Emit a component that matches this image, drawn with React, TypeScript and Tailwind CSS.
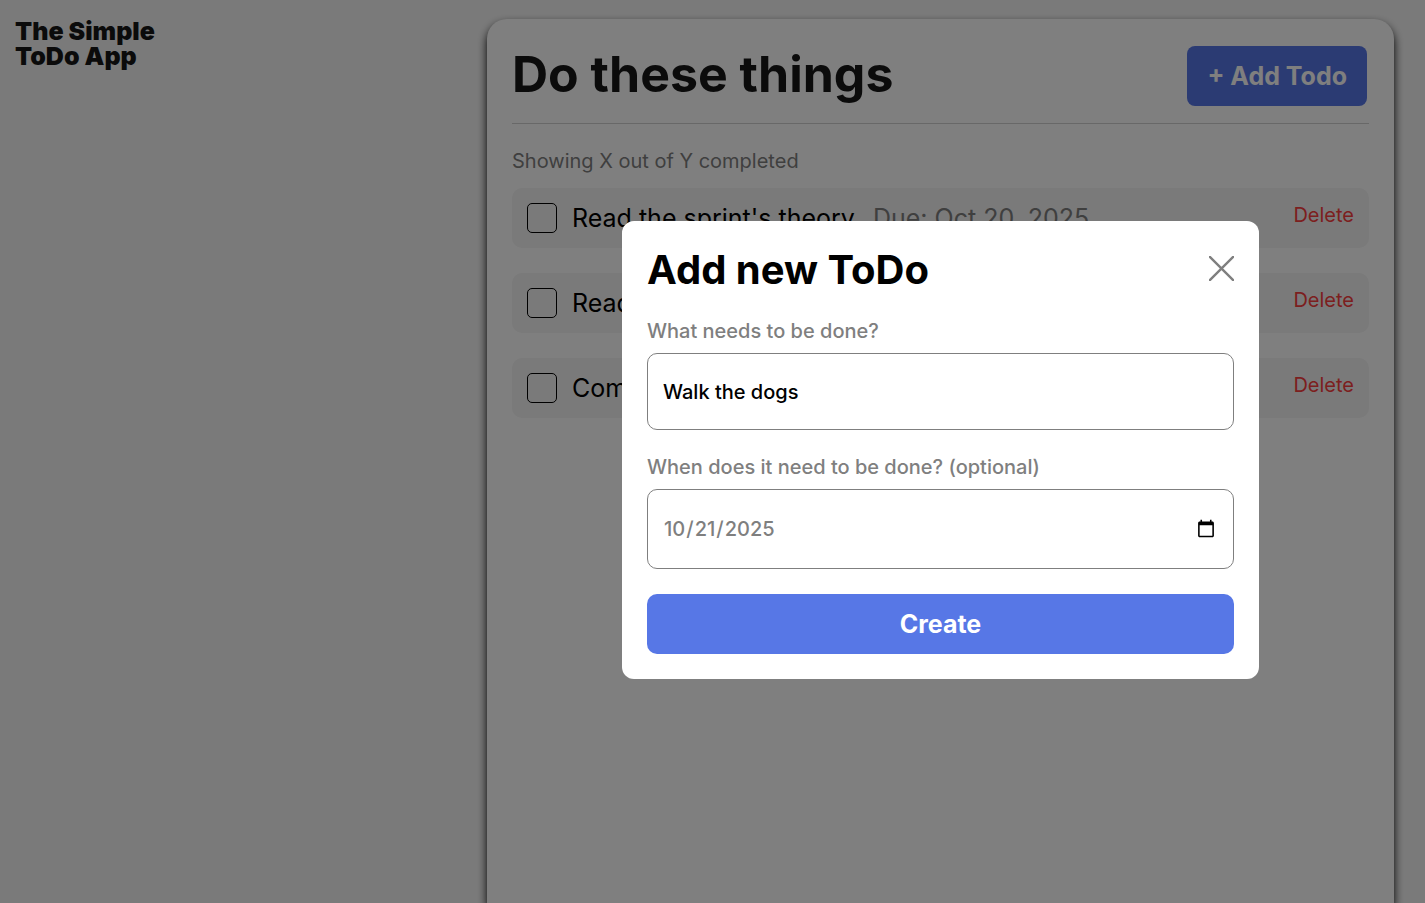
import { useState } from "react";

const initialTodos = [
  { id: 1, name: "Read the sprint's theory", due: "Due: Oct 20, 2025" },
  { id: 2, name: "Read project instructions", due: "" },
  { id: 3, name: "Complete project", due: "" },
];

function TodoItem({ id, name, due, onDelete }: { id: number; name: string; due: string; onDelete: () => void }) {
  const inputId = `todo-${id}`;
  return (
    <li className="flex h-[60px] items-start justify-between rounded-[10px] bg-[#f4f4f4] px-[15px] pt-[15px]">
      <div className="flex items-center">
        <input
          id={inputId}
          type="checkbox"
          className="size-[30px] shrink-0 appearance-none rounded-[5px] border border-black checked:bg-[#5777e6]"
        />
        <label htmlFor={inputId} className="ml-[15px] text-[25px] leading-[30px]">
          {name}
        </label>
        {due && <span className="ml-[18px] text-[25px] leading-[30px] text-[#7f7f7f]">{due}</span>}
      </div>
      <button type="button" onClick={onDelete} className="text-xl leading-6 text-[#f93e3e]">
        Delete
      </button>
    </li>
  );
}

function AddTodoDialog({ onClose }: { onClose: () => void }) {
  return (
    <div className="fixed inset-0 flex items-center justify-center bg-black/50 pr-[31px] pb-[3px] pl-[487px]">
      <form
        role="dialog"
        aria-labelledby="dialog-title"
        onSubmit={(event) => {
          event.preventDefault();
          onClose();
        }}
        className="flex w-full max-w-[637px] flex-col rounded-xl bg-white p-[25px]"
      >
        <div className="flex items-start justify-between">
          <h2 id="dialog-title" className="text-[40px] leading-[48px] font-bold">
            Add new ToDo
          </h2>
          <button type="button" aria-label="Close" onClick={onClose} className="mt-[10px]">
            <svg viewBox="0 0 25 25" className="size-[25px]" fill="none" stroke="#7f7f7f" strokeWidth="2.4">
              <path d="M0 0 25 25M25 0 0 25" />
            </svg>
          </button>
        </div>
        <label htmlFor="todo-name" className="mt-[25px] text-xl leading-6 font-medium text-[#7f7f7f]">
          What needs to be done?
        </label>
        <input
          id="todo-name"
          type="text"
          defaultValue="Walk the dogs"
          className="mt-[10px] h-[77px] rounded-[10px] border border-[#7f7f7f] px-[15px] text-xl leading-6 font-medium outline-none"
        />
        <label htmlFor="todo-date" className="mt-[25px] text-xl leading-6 font-medium text-[#7f7f7f]">
          When does it need to be done? (optional)
        </label>
        <input
          id="todo-date"
          type="date"
          defaultValue="2025-10-21"
          className="mt-[10px] h-20 rounded-[10px] border border-[#7f7f7f] px-[15px] text-xl leading-6 font-medium text-[#7f7f7f] outline-none"
        />
        <button
          type="submit"
          className="mt-[25px] h-[60px] rounded-[10px] bg-[#5777e6] text-[25px] leading-[30px] font-bold text-white"
        >
          Create
        </button>
      </form>
    </div>
  );
}

export default function App() {
  const [todos, setTodos] = useState(initialTodos);
  const [isOpen, setIsOpen] = useState(true);
  return (
    <div className="flex h-screen overflow-hidden bg-[#f5f5f5] font-['Inter',sans-serif] text-black">
      <header className="w-[487px] shrink-0 pt-[19px] pl-[15px]">
        <p className="text-[25px] leading-[25px] font-black text-[#171717]">
          The Simple
          <br />
          ToDo App
        </p>
      </header>
      <main className="mt-[19px] mr-[31px] flex-1 rounded-t-[20px] bg-white px-[25px] shadow-[0_5px_10px_#000]">
        <div className="flex h-[105px] items-start justify-between border-b border-[#d1d1d1] pt-[25px] pr-[2px]">
          <h1 className="text-[50px] leading-[60px] font-bold text-[#171717]">Do these things</h1>
          <button
            type="button"
            onClick={() => setIsOpen(true)}
            className="mt-[2px] h-[60px] rounded-lg bg-[#5777e6] px-5 text-[25px] leading-[30px] font-bold text-white"
          >
            + Add Todo
          </button>
        </div>
        <p className="mt-[25px] text-xl leading-6 text-[#7f7f7f]">Showing X out of Y completed</p>
        <ul className="mt-[15px] flex flex-col gap-[25px]">
          {todos.map((todo) => (
            <TodoItem
              key={todo.id}
              {...todo}
              onDelete={() => setTodos(todos.filter((other) => other.id !== todo.id))}
            />
          ))}
        </ul>
      </main>
      {isOpen && <AddTodoDialog onClose={() => setIsOpen(false)} />}
    </div>
  );
}
